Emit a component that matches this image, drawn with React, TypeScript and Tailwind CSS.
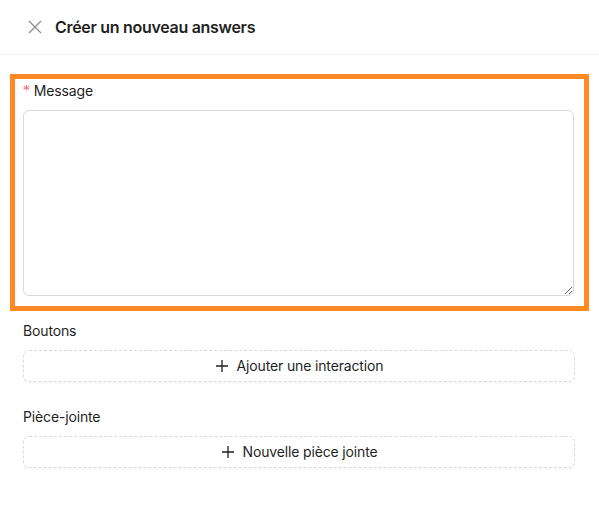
import React from "react";

const PlusIcon = () => (
  <svg width="14" height="14" viewBox="0 0 14 14" fill="none" className="shrink-0">
    <path d="M7 1v12M1 7h12" stroke="currentColor" strokeWidth="1.3" />
  </svg>
);

const DashedButton = ({ label }: { label: string }) => (
  <button className="flex h-8 w-full items-center justify-center gap-2 rounded-md border border-dashed border-[#d9d9d9] bg-white text-sm tracking-[-0.15px] text-[#1f1f1f] shadow-[0_2px_0_rgba(0,0,0,0.02)]">
    <PlusIcon />
    <span>{label}</span>
  </button>
);

export default function App() {
  return (
    <div className="h-[505px] w-[599px] bg-white font-['Inter','Liberation_Sans',sans-serif] text-[#1f1f1f]">
      <div className="flex h-[55px] items-center border-b border-[#f0f0f0] pl-[28px]">
        <svg width="14" height="14" viewBox="0 0 14 14" fill="none" className="text-[#8c8c8c]">
          <path d="M1 1l12 12M13 1L1 13" stroke="currentColor" strokeWidth="1.3" />
        </svg>
        <h1 className="ml-[13px] text-base font-semibold leading-6 tracking-[-0.3px]">Créer un nouveau answers</h1>
      </div>

      <div className="px-[10px] pt-[19px]">
        <div className="border-[5px] border-[#ff8a24] pl-2 pr-[10px] pt-px pb-[10px]">
          <div className="flex h-[22px] items-center text-sm leading-[22px] tracking-[-0.15px]">
            <span className="mr-1 font-['Liberation_Serif',serif] text-sm text-[#ff4d4f]">*</span>
            <span>Message</span>
          </div>
          <div className="pt-2">
            <textarea className="block h-[186px] w-full rounded-md border border-[#d9d9d9] px-[11px] py-1 text-sm outline-none" />
          </div>
        </div>

        <div className="pl-[13px] pr-[14px]">
          <div className="mt-[9px]">
            <div className="pb-2 text-sm leading-[22px] tracking-[-0.15px]">Boutons</div>
            <DashedButton label="Ajouter une interaction" />
          </div>
          <div className="mt-6">
            <div className="pb-2 text-sm leading-[22px] tracking-[-0.15px]">Pièce-jointe</div>
            <DashedButton label="Nouvelle pièce jointe" />
          </div>
        </div>
      </div>
    </div>
  );
}
